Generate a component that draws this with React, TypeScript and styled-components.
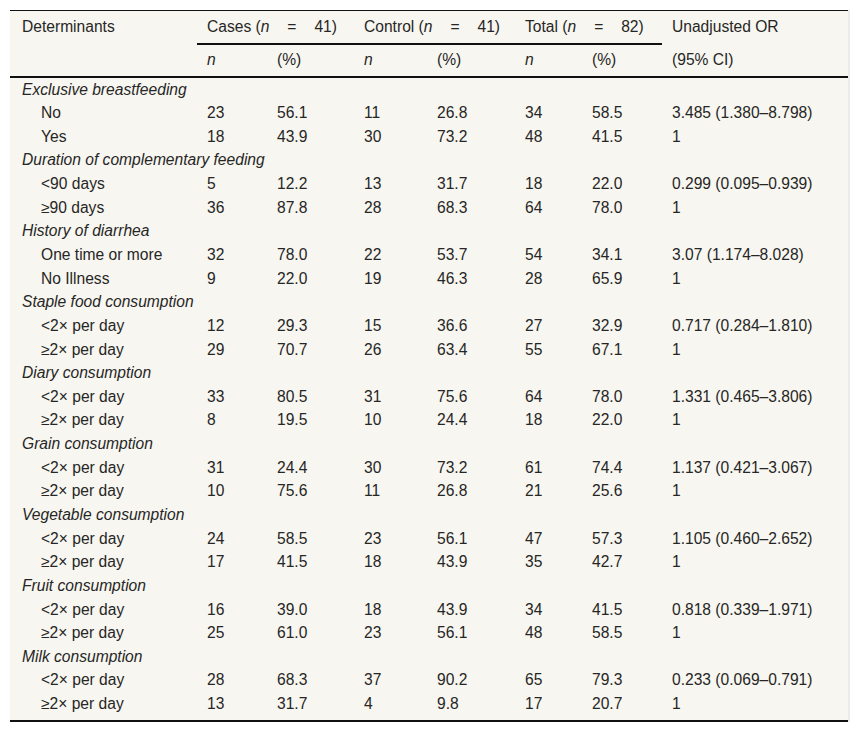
import React from 'react';
import styled, { createGlobalStyle } from 'styled-components';

const GlobalStyle = createGlobalStyle`
  body {
    margin: 0;
    background: #ffffff;
    font-family: 'Liberation Sans', Arial, Helvetica, sans-serif;
    color: #262626;
  }
`;

const Page = styled.div`
  padding: 10px 0 0 10px;
`;

const Frame = styled.div`
  width: 838px;
  border-right: 2px solid #ebebeb;
`;

const Table = styled.table`
  width: 838px;
  table-layout: fixed;
  border-collapse: collapse;
  background: #f8f6f0;
  font-size: 15.6px;
  border-top: 1px solid #111;
  border-bottom: 2px solid #111;
`;

const HeadRow = styled.tr<{ $first?: boolean }>`
  height: 33px;
`;

const Th = styled.th<{ $rule?: boolean; $pad?: number; $bottom?: boolean }>`
  font-weight: normal;
  text-align: left;
  vertical-align: middle;
  white-space: nowrap;
  padding: ${(p) => (p.$rule ? '1px' : '0')} 0 0 ${(p) => p.$pad ?? 10}px;
  border-bottom: ${(p) => (p.$rule || p.$bottom ? '2px solid #111' : 'none')};
`;

const Eq = styled.span`
  margin: 0 1.15em;
`;

const Row = styled.tr<{ $last?: boolean }>`
  height: ${(p) => (p.$last ? '27.6px' : '23.65px')};
`;

const Td = styled.td<{ $indent?: boolean; $last?: boolean }>`
  white-space: nowrap;
  vertical-align: top;
  line-height: 23.6px;
  padding: 0 0 ${(p) => (p.$last ? '4px' : '0')}
    ${(p) => (p.$indent ? '31px' : '10px')};
`;

const GroupCell = styled.td`
  font-style: italic;
  white-space: nowrap;
  vertical-align: top;
  line-height: 23.6px;
  padding: 0 0 0 12px;
`;

const widths = [187, 70, 87, 73, 88, 67, 80, 186];

type Group = { title: string; rows: string[][] };

const groups: Group[] = [
  {
    title: 'Exclusive breastfeeding',
    rows: [
      ['No', '23', '56.1', '11', '26.8', '34', '58.5', '3.485 (1.380–8.798)'],
      ['Yes', '18', '43.9', '30', '73.2', '48', '41.5', '1'],
    ],
  },
  {
    title: 'Duration of complementary feeding',
    rows: [
      ['<90 days', '5', '12.2', '13', '31.7', '18', '22.0', '0.299 (0.095–0.939)'],
      ['≥90 days', '36', '87.8', '28', '68.3', '64', '78.0', '1'],
    ],
  },
  {
    title: 'History of diarrhea',
    rows: [
      ['One time or more', '32', '78.0', '22', '53.7', '54', '34.1', '3.07 (1.174–8.028)'],
      ['No Illness', '9', '22.0', '19', '46.3', '28', '65.9', '1'],
    ],
  },
  {
    title: 'Staple food consumption',
    rows: [
      ['<2× per day', '12', '29.3', '15', '36.6', '27', '32.9', '0.717 (0.284–1.810)'],
      ['≥2× per day', '29', '70.7', '26', '63.4', '55', '67.1', '1'],
    ],
  },
  {
    title: 'Diary consumption',
    rows: [
      ['<2× per day', '33', '80.5', '31', '75.6', '64', '78.0', '1.331 (0.465–3.806)'],
      ['≥2× per day', '8', '19.5', '10', '24.4', '18', '22.0', '1'],
    ],
  },
  {
    title: 'Grain consumption',
    rows: [
      ['<2× per day', '31', '24.4', '30', '73.2', '61', '74.4', '1.137 (0.421–3.067)'],
      ['≥2× per day', '10', '75.6', '11', '26.8', '21', '25.6', '1'],
    ],
  },
  {
    title: 'Vegetable consumption',
    rows: [
      ['<2× per day', '24', '58.5', '23', '56.1', '47', '57.3', '1.105 (0.460–2.652)'],
      ['≥2× per day', '17', '41.5', '18', '43.9', '35', '42.7', '1'],
    ],
  },
  {
    title: 'Fruit consumption',
    rows: [
      ['<2× per day', '16', '39.0', '18', '43.9', '34', '41.5', '0.818 (0.339–1.971)'],
      ['≥2× per day', '25', '61.0', '23', '56.1', '48', '58.5', '1'],
    ],
  },
  {
    title: 'Milk consumption',
    rows: [
      ['<2× per day', '28', '68.3', '37', '90.2', '65', '79.3', '0.233 (0.069–0.791)'],
      ['≥2× per day', '13', '31.7', '4', '9.8', '17', '20.7', '1'],
    ],
  },
];

const GroupHead = ({ label, n }: { label: string; n: number }) => (
  <>
    {label} (<i>n</i>
    <Eq>=</Eq>
    {n})
  </>
);

export default function App() {
  return (
    <Page>
      <GlobalStyle />
      <Frame>
        <Table>
          <colgroup>
            {widths.map((w, i) => (
              <col key={i} style={{ width: w }} />
            ))}
          </colgroup>
          <thead>
            <HeadRow $first>
              <Th $pad={12}>Determinants</Th>
              <Th colSpan={2} $rule>
                <GroupHead label="Cases" n={41} />
              </Th>
              <Th colSpan={2} $rule>
                <GroupHead label="Control" n={41} />
              </Th>
              <Th colSpan={2} $rule>
                <GroupHead label="Total" n={82} />
              </Th>
              <Th>Unadjusted OR</Th>
            </HeadRow>
            <HeadRow>
              <Th $pad={12} $bottom />
              <Th $bottom>
                <i>n</i>
              </Th>
              <Th $bottom>(%)</Th>
              <Th $bottom>
                <i>n</i>
              </Th>
              <Th $bottom>(%)</Th>
              <Th $bottom>
                <i>n</i>
              </Th>
              <Th $bottom>(%)</Th>
              <Th $bottom>(95% CI)</Th>
            </HeadRow>
          </thead>
          <tbody>
            {groups.map((g, gi) => (
              <React.Fragment key={g.title}>
                <Row>
                  <GroupCell colSpan={8}>{g.title}</GroupCell>
                </Row>
                {g.rows.map((r, ri) => {
                  const last = gi === groups.length - 1 && ri === g.rows.length - 1;
                  return (
                    <Row key={ri} $last={last}>
                      {r.map((c, ci) => (
                        <Td key={ci} $indent={ci === 0} $last={last}>
                          {c}
                        </Td>
                      ))}
                    </Row>
                  );
                })}
              </React.Fragment>
            ))}
          </tbody>
        </Table>
      </Frame>
    </Page>
  );
}
